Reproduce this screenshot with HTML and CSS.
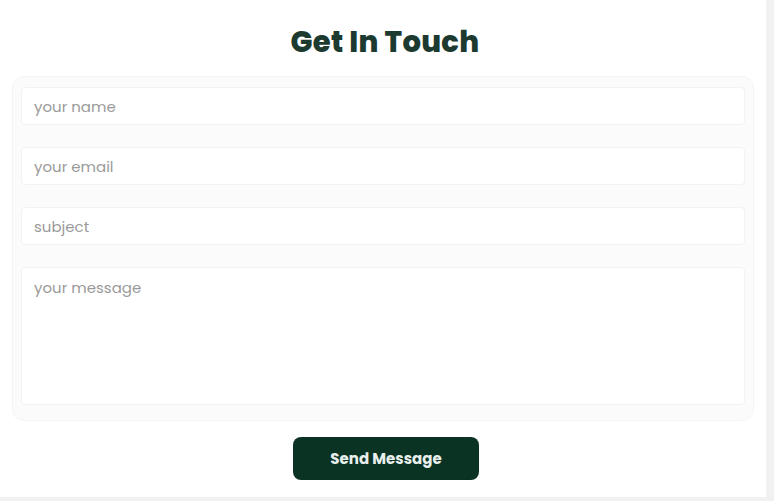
FILE: index.html
```html
<!DOCTYPE html>
<html>
<head>
<meta charset="utf-8">
<link rel="stylesheet" href="styles.css">
</head>
<body>
<section class="contact">
  <h2 class="title">Get In Touch</h2>
  <form class="form">
    <input class="field" type="text" placeholder="your name">
    <input class="field" type="email" placeholder="your email">
    <input class="field" type="text" placeholder="subject">
    <textarea class="field area" placeholder="your message"></textarea>
  </form>
  <div class="actions">
    <button class="send" type="button">Send Message</button>
  </div>
</section>
</body>
</html>
```
FILE: styles.css
```css
html, body {
  margin: 0;
  padding: 0;
  background: #f1f1f1;
  font-family: "Poppins", "Inter", "Liberation Sans", sans-serif;
}
.contact {
  width: 766px;
  height: 497px;
  background: #fff;
  box-sizing: border-box;
  padding-top: 24px;
  display: flex;
  flex-direction: column;
  align-items: center;
}
.title {
  margin: 0;
  font-size: 29px;
  font-weight: 800;
  color: #1c3a30;
  line-height: 36px;
  letter-spacing: 0.3px;
  padding-left: 4px;
}
.form {
  margin-top: 16px;
  width: 742px;
  box-sizing: border-box;
  background: #fbfbfb;
  border: 1px solid #f4f4f4;
  border-radius: 12px;
  padding: 10px 8px 15px;
  display: flex;
  flex-direction: column;
  gap: 22px;
}
.field {
  display: block;
  width: 100%;
  box-sizing: border-box;
  height: 38px;
  border: 1px solid #f3f3f3;
  border-radius: 4px;
  background: #fff;
  padding: 0 12px;
  font-family: inherit;
  font-size: 15px;
  color: #333;
  outline: none;
}
.field::placeholder {
  color: #9a9a9a;
}
.area {
  height: 138px;
  padding-top: 8px;
  resize: none;
}
.actions {
  margin-top: 16px;
  padding-left: 6px;
}
.send {
  width: 186px;
  height: 43px;
  border: none;
  border-radius: 8px;
  background: #0b3324;
  color: #e8efec;
  font-family: inherit;
  font-size: 15px;
  font-weight: 700;
}
```
